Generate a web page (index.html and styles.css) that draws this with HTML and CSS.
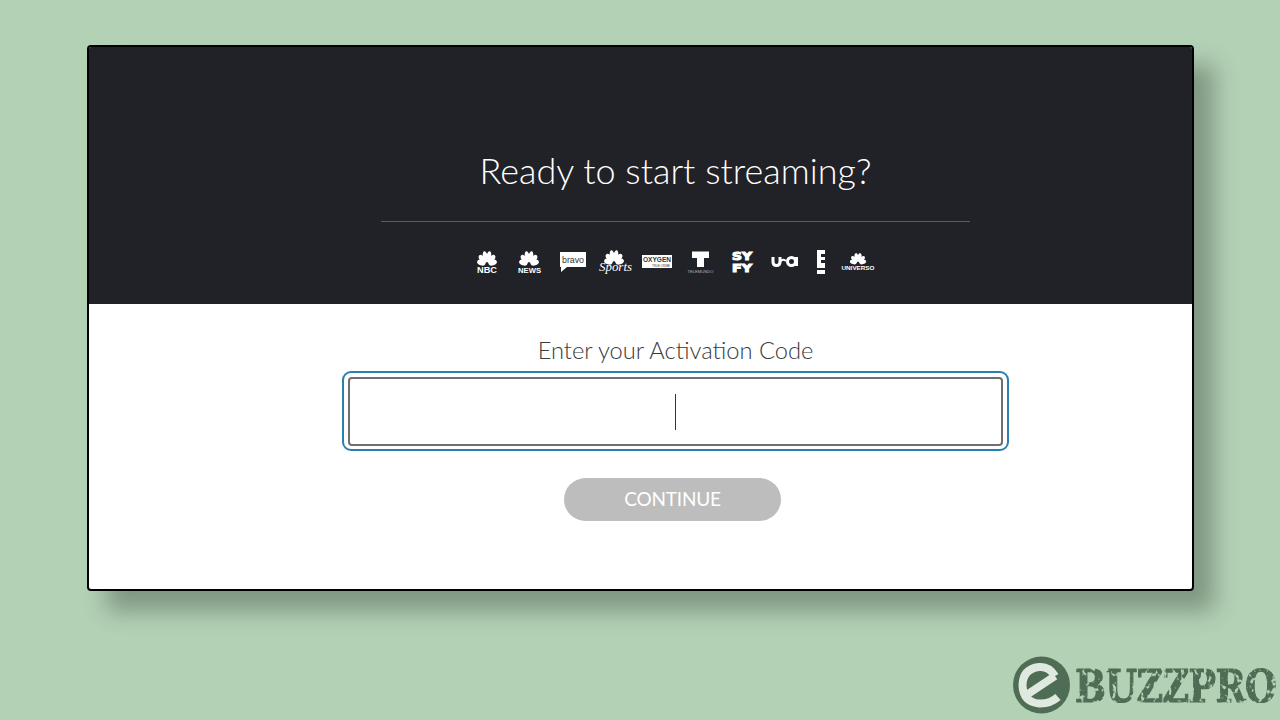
FILE: index.html
```html
<!DOCTYPE html>
<html>
<head>
    <title>Activate</title>
    <link rel="stylesheet" href="styles.css">
</head>
<body>
    <div class="card">
        <div class="card-top">
            <h1>Ready to start streaming?</h1>
            <div class="divider"></div>
            <svg class="logos" width="400" height="26" viewBox="0 0 400 26">
                <defs>
                    <g id="peacock">
                        <ellipse cx="11" cy="7.500" rx="2.700" ry="4.300" transform="rotate(-72 11 13.500)"/>
                        <ellipse cx="11" cy="6.500" rx="2.600" ry="5" transform="rotate(-40 11 13.500)"/>
                        <ellipse cx="11" cy="5.500" rx="2.400" ry="5.600" transform="rotate(-12 11 13.500)"/>
                        <ellipse cx="11" cy="5.500" rx="2.400" ry="5.600" transform="rotate(12 11 13.500)"/>
                        <ellipse cx="11" cy="6.500" rx="2.600" ry="5" transform="rotate(40 11 13.500)"/>
                        <ellipse cx="11" cy="7.500" rx="2.700" ry="4.300" transform="rotate(72 11 13.500)"/>
                    </g>
                </defs>
                <g class="logo">
                    <use href="#peacock" x="0" y="1"/>
                    <text class="t-bold" x="11" y="23" font-size="9" text-anchor="middle" textLength="20" lengthAdjust="spacingAndGlyphs">NBC</text>
                </g>
                <g class="logo">
                    <use href="#peacock" x="42" y="1"/>
                    <text class="t-bold" x="53.500" y="23" font-size="8" text-anchor="middle" textLength="23" lengthAdjust="spacingAndGlyphs">NEWS</text>
                </g>
                <g class="logo">
                    <path d="M84 2 H110 V17 H91 L85 22 V17 H84 Z"/>
                    <text class="t-dark" x="97" y="12.500" font-size="9" text-anchor="middle" textLength="22" lengthAdjust="spacingAndGlyphs">bravo</text>
                </g>
                <g class="logo">
                    <use href="#peacock" x="127" y="0"/>
                    <text class="t-script" x="139.500" y="21" font-size="12" text-anchor="middle" textLength="33" lengthAdjust="spacingAndGlyphs">Sports</text>
                </g>
                <g class="logo">
                    <rect x="166" y="5" width="30" height="13"/>
                    <text class="t-dark-bold" x="181" y="11.500" font-size="6.500" text-anchor="middle" textLength="28" lengthAdjust="spacingAndGlyphs">OXYGEN</text>
                    <text class="t-dark" x="185" y="16.500" font-size="3.500" text-anchor="middle" textLength="18" lengthAdjust="spacingAndGlyphs">TRUE CRIME</text>
                </g>
                <g class="logo">
                    <path d="M216 1.500 H233 V8 H228 V17 H221 V8 H216 Z"/>
                    <text class="t-thin" x="224.500" y="23" font-size="3.500" text-anchor="middle" textLength="26" lengthAdjust="spacingAndGlyphs">TELEMUNDO</text>
                </g>
                <g class="logo">
                    <text class="t-heavy" x="266" y="9.500" font-size="10.200" text-anchor="middle" textLength="20" lengthAdjust="spacingAndGlyphs">SY</text>
                    <text class="t-heavy" x="266" y="21.500" font-size="10.200" text-anchor="middle" textLength="20" lengthAdjust="spacingAndGlyphs">FY</text>
                </g>
                <g class="logo">
                    <path class="stroke" d="M297 7 V12 Q297 15.500 300.500 15.500 Q304 15.500 304 12 V7"/>
                    <path class="stroke thin" d="M304 12 Q307 8 310 11"/>
                    <circle class="stroke" cx="315.500" cy="11.500" r="4"/>
                    <rect x="319" y="7" width="3" height="9"/>
                </g>
                <g class="logo">
                    <path d="M341 0 H349 V4 H345 V7 H349 V10 H345 V13 H349 V18 H341 Z"/>
                    <rect x="341" y="20" width="8" height="4"/>
                </g>
                <g class="logo">
                    <use href="#peacock" transform="translate(373 3) scale(.82 .78)"/>
                    <text class="t-bold" x="382" y="20" font-size="6" text-anchor="middle" textLength="33" lengthAdjust="spacingAndGlyphs">UNIVERSO</text>
                </g>
            </svg>
        </div>
        <div class="card-bottom">
            <label class="code-label">Enter your Activation Code</label>
            <div class="code-focus">
                <div class="code-input"><span class="caret"></span></div>
            </div>
            <button class="continue-btn">CONTINUE</button>
        </div>
    </div>

    <svg class="watermark" width="267" height="60" viewBox="0 0 267 60">
        <defs>
            <filter id="worn" x="0" y="0" width="100%" height="100%">
                <feTurbulence type="fractalNoise" baseFrequency="0.22" numOctaves="2" seed="4"/>
                <feColorMatrix values="0 0 0 0 0  0 0 0 0 0  0 0 0 0 0  0 0 0 -6 4.300"/>
                <feComposite in="SourceGraphic" operator="in"/>
            </filter>
        </defs>
        <circle cx="28.500" cy="29" r="28.500" fill="#4f6d55"/>
        <path d="M15 38 L42 20 M42 20 Q36 10 26 11 Q10 13 9.500 29 Q10 46 26 47.500 Q37 48 45 41" fill="none" stroke="#dfe9df" stroke-width="8"/>
        <text class="brand" x="62" y="37.700" transform="scale(1 1.220)" filter="url(#worn)">BUZZPRO</text>
    </svg>
</body>
</html>
```

FILE: styles.css
```css
body {
    margin: 0;
    height: 720px;
    overflow: hidden;
    padding: 45px 0 0 87px;
    box-sizing: border-box;
    background-color: #b2d1b5;
    font-family: Lato, Arial, sans-serif;
}

.card {
    width: 1107px;
    height: 546px;
    box-sizing: border-box;
    border: 2px solid #000;
    border-radius: 4px;
    background-color: #fff;
    box-shadow: 20px 20px 22px rgba(60, 75, 62, 0.42);
    overflow: hidden;
    display: flex;
    flex-direction: column;
}

.card-top {
    height: 257px;
    box-sizing: border-box;
    padding-left: 70px;
    background-color: #212227;
    display: flex;
    flex-direction: column;
    align-items: center;
}

.card-top h1 {
    margin: 98px 0 0 0;
    font-size: 36px;
    line-height: 50px;
    font-weight: 300;
    color: #fff;
}

.divider {
    width: 589px;
    height: 1px;
    margin-top: 26px;
    background-color: #5b5c60;
}

.logos {
    margin-top: 28px;
    fill: #fff;
}

.logos text {
    font-family: "Liberation Sans", Arial, sans-serif;
}

.logos .t-bold {
    font-weight: 700;
}

.logos .t-dark {
    fill: #33343a;
}

.logos .t-dark-bold {
    fill: #33343a;
    font-weight: 700;
}

.logos .t-script {
    font-family: "Liberation Serif", serif;
    font-style: italic;
}

.logos .t-thin {
    fill: #b5b5b7;
}

.logos .t-heavy {
    font-family: "DejaVu Sans", sans-serif;
    font-weight: 700;
    stroke: #fff;
    stroke-width: 1px;
}

.logos .stroke {
    fill: none;
    stroke: #fff;
    stroke-width: 3px;
}

.logos .thin {
    stroke-width: 2px;
}

.card-bottom {
    flex: 1;
    padding-left: 70px;
    display: flex;
    flex-direction: column;
    align-items: center;
}

.code-label {
    margin-top: 29px;
    font-size: 23.700px;
    line-height: 34px;
    font-weight: 300;
    color: #3a3a3a;
}

.code-focus {
    width: 667px;
    height: 80px;
    margin-top: 4px;
    padding: 4px 4px 3px 4px;
    box-sizing: border-box;
    border: 2px solid #2b80b3;
    border-radius: 9px;
}

.code-input {
    height: 100%;
    box-sizing: border-box;
    border: 2px solid #6f6f6f;
    border-radius: 4px;
    display: flex;
    align-items: center;
    justify-content: center;
}

.caret {
    width: 1px;
    height: 36px;
    background-color: #333;
}

.continue-btn {
    width: 217px;
    height: 43px;
    margin-top: 27px;
    margin-left: -6px;
    padding: 0 0 3px 0;
    border: none;
    border-radius: 22px;
    background-color: #bdbdbd;
    color: #fff;
    font-family: Lato, Arial, sans-serif;
    font-size: 19px;
    font-weight: 400;
    letter-spacing: -0.2px;
}

.watermark {
    position: absolute;
    left: 1013px;
    top: 656px;
}

.brand {
    font-family: "DejaVu Serif", serif;
    font-size: 36.500px;
    font-weight: 700;
    letter-spacing: -0.6px;
    fill: #4f6d55;
    stroke: #4f6d55;
    stroke-width: 1px;
}
```
